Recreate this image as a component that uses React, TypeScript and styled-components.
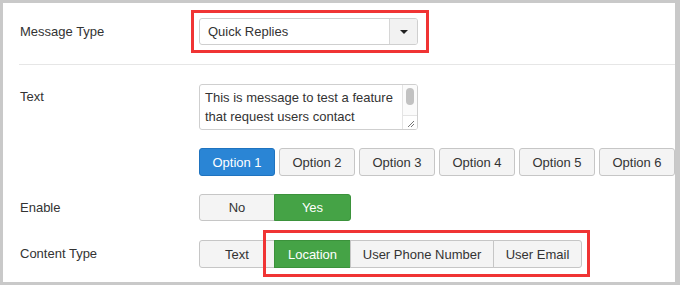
import React from 'react';
import styled, { createGlobalStyle } from 'styled-components';

const GlobalStyle = createGlobalStyle`
    html, body {
        margin: 0;
        padding: 0;
        background: #ffffff;
    }
    body {
        font-family: "Liberation Sans", Arial, sans-serif;
        font-size: 13px;
        color: #333333;
    }
`;

const Frame = styled.div`
    width: 680px;
    height: 285px;
    box-sizing: border-box;
    border-style: solid;
    border-color: #c9c9c9;
    border-width: 3px 5px 3px 3px;
    background: #ffffff;
    overflow: hidden;
`;

const Panel = styled.div`
    display: flex;
    flex-direction: column;
    padding: 15px 0 0 17px;
`;

const Row = styled.div<{ $top?: number; $align?: string }>`
    display: grid;
    grid-template-columns: 179px 1fr;
    align-items: ${p => p.$align || 'center'};
    margin-top: ${p => p.$top || 0}px;
`;

const Label = styled.div<{ $pad?: number }>`
    line-height: 18px;
    padding-top: ${p => p.$pad || 0}px;
    color: #333333;
`;

const Divider = styled.div`
    height: 1px;
    background: #e6e6e6;
    margin: 19px 0 19px -1px;
`;

// red annotation box drawn over the highlighted controls
const Highlight = styled.div<{ $l: number; $t: number; $r: number; $b: number; $shift?: number }>`
    position: relative;
    display: flex;
    width: max-content;
    margin-left: ${p => p.$shift || 0}px;
    &::after {
        content: '';
        position: absolute;
        left: ${p => -p.$l}px;
        top: ${p => -p.$t}px;
        right: ${p => -p.$r}px;
        bottom: ${p => -p.$b}px;
        border: 3px solid #f03434;
        pointer-events: none;
    }
`;

const Select = styled.div`
    display: flex;
    width: 219px;
    height: 27px;
    box-sizing: border-box;
    border: 1px solid #cfcfcf;
    border-radius: 3px;
    background: #ffffff;
    overflow: hidden;
`;

const SelectValue = styled.div`
    flex: 1;
    display: flex;
    align-items: center;
    padding-left: 8px;
    color: #333333;
`;

const SelectCaret = styled.div`
    width: 27px;
    display: flex;
    align-items: center;
    justify-content: center;
    border-left: 1px solid #d6d6d6;
    background: #f2f2f2;
    &::before {
        content: '';
        width: 0;
        height: 0;
        border-left: 4px solid transparent;
        border-right: 4px solid transparent;
        border-top: 4px solid #222222;
    }
`;

const TextBox = styled.div`
    position: relative;
    width: 219px;
    height: 46px;
    box-sizing: border-box;
    border: 1px solid #cfcfcf;
    border-radius: 3px;
    overflow: hidden;
    background: #ffffff;
`;

const TextBody = styled.div`
    padding: 3px 20px 0 5px;
    line-height: 19px;
    color: #333333;
`;

const ScrollTrack = styled.div`
    position: absolute;
    top: 0;
    right: 0;
    bottom: 0;
    width: 14px;
    border-left: 1px solid #e4e4e4;
    background: #fbfbfb;
`;

const ScrollThumb = styled.div`
    position: absolute;
    top: 3px;
    left: 3px;
    width: 8px;
    height: 17px;
    border-radius: 4px;
    background: #c2c2c2;
`;

const Grip = styled.div`
    position: absolute;
    right: 0;
    bottom: 0;
    width: 14px;
    height: 13px;
    border-top: 1px solid #e4e4e4;
    background: #ffffff;
`;

const ButtonRow = styled.div`
    display: flex;
    gap: 4px;
    flex-wrap: nowrap;
`;

const Group = styled.div`
    display: flex;
`;

type Variant = 'primary' | 'success';

const borderFor = (v?: Variant) => (v === 'primary' ? '#1f73bf' : v === 'success' ? '#3b923b' : '#c6c6c6');
const bgFor = (v?: Variant) => (v === 'primary' ? '#2a85d5' : v === 'success' ? '#45a346' : '#f4f4f4');

const radiusFor = (round?: 'all' | 'left' | 'right' | 'none') => {
    if (round === 'left') return '3px 0 0 3px';
    if (round === 'right') return '0 3px 3px 0';
    if (round === 'none') return '0';
    return '3px';
};

const Button = styled.div<{
    $variant?: Variant;
    $w: number;
    $h?: number;
    $round?: 'all' | 'left' | 'right' | 'none';
    $joined?: boolean;
}>`
    flex: none;
    display: flex;
    align-items: center;
    justify-content: center;
    box-sizing: border-box;
    width: ${p => p.$w}px;
    height: ${p => p.$h || 28}px;
    margin-left: ${p => (p.$joined ? -1 : 0)}px;
    border: 1px solid ${p => borderFor(p.$variant)};
    border-radius: ${p => radiusFor(p.$round)};
    background: ${p => bgFor(p.$variant)};
    color: ${p => (p.$variant ? '#ffffff' : '#333333')};
    white-space: nowrap;
`;

const options = ['Option 1', 'Option 2', 'Option 3', 'Option 4', 'Option 5', 'Option 6', 'Option 7'];

const App = () => {
    return (
        <>
            <GlobalStyle />
            <Frame>
                <Panel>
                    <Row>
                        <Label>Message Type</Label>
                        <Highlight $l={8} $t={8} $r={11} $b={8}>
                            <Select>
                                <SelectValue>Quick Replies</SelectValue>
                                <SelectCaret />
                            </Select>
                        </Highlight>
                    </Row>

                    <Divider />

                    <Row $align="start">
                        <Label $pad={4}>Text</Label>
                        <TextBox>
                            <TextBody>
                                This is message to test a feature that request users contact information including
                            </TextBody>
                            <ScrollTrack>
                                <ScrollThumb />
                            </ScrollTrack>
                            <Grip>
                                <svg width="14" height="13" viewBox="0 0 14 13">
                                    <path d="M5 11 L11 5 M8 11 L11 8" stroke="#777" strokeWidth="1" fill="none" />
                                </svg>
                            </Grip>
                        </TextBox>
                    </Row>

                    <Row $top={18}>
                        <div />
                        <ButtonRow>
                            {options.map((o, i) => (
                                <Button key={o} $w={76} $variant={i === 0 ? 'primary' : undefined}>
                                    {o}
                                </Button>
                            ))}
                        </ButtonRow>
                    </Row>

                    <Row $top={18}>
                        <Label>Enable</Label>
                        <Group>
                            <Button $w={76} $h={27} $round="left">No</Button>
                            <Button $w={77} $h={27} $round="right" $joined $variant="success">Yes</Button>
                        </Group>
                    </Row>

                    <Row $top={19}>
                        <Label>Content Type</Label>
                        <Group>
                            <Button $w={76} $round="left">Text</Button>
                            <Highlight $l={11} $t={10} $r={8} $b={9} $shift={-1}>
                                <Button $w={77} $round="none" $variant="success">Location</Button>
                                <Button $w={144} $round="none" $joined>User Phone Number</Button>
                                <Button $w={89} $round="right" $joined>User Email</Button>
                            </Highlight>
                        </Group>
                    </Row>
                </Panel>
            </Frame>
        </>
    );
};

export default App;
